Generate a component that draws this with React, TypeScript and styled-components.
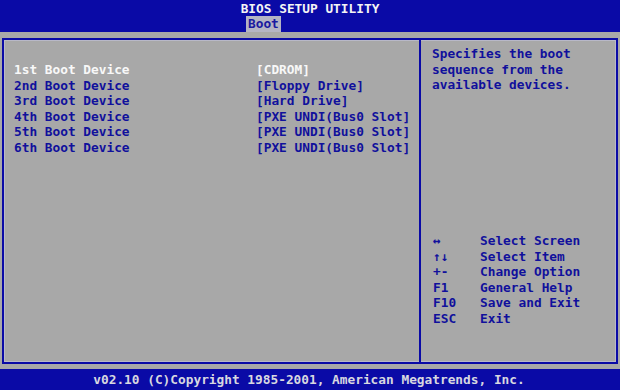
import React from 'react'
import styled, { createGlobalStyle } from 'styled-components'

const GlobalStyle = createGlobalStyle`
  html, body {
    margin: 0;
    padding: 0;
    background: #a8a8a8;
  }
  body {
    font-family: "DejaVu Sans Mono", "Liberation Mono", monospace;
    font-weight: bold;
    font-size: 12.8px;
  }
`

const BLUE = '#0a0aa6'
const TEXT_BLUE = '#10109c'

const Screen = styled.div`
  width: 620px;
  height: 390px;
  display: flex;
  flex-direction: column;
  background: #a8a8a8;
  overflow: hidden;
`

const Header = styled.header`
  height: 32px;
  background: ${BLUE};
  display: flex;
  flex-direction: column;
  align-items: center;
  box-sizing: border-box;
  padding-top: 2px;
`

const Title = styled.div`
  color: #f4f4f4;
  line-height: 13px;
`

const Tabs = styled.div`
  display: flex;
  width: 100%;
  padding-left: 246px;
  box-sizing: border-box;
  margin-top: 1px;
`

const Tab = styled.div<{ $active?: boolean }>`
  height: 16px;
  line-height: 16px;
  padding: 0 2px;
  color: ${(p) => (p.$active ? '#1a1aa0' : '#d0d0d0')};
  background: ${(p) => (p.$active ? '#b4b4c4' : 'transparent')};
`

const Body = styled.main`
  flex: 1;
  padding: 6px 2px 5px 2px;
  box-sizing: border-box;
  display: flex;
`

const Frame = styled.div`
  flex: 1;
  display: grid;
  grid-template-columns: 417px 1fr;
  border: 2px solid ${BLUE};
  box-shadow: inset 0 0 0 1px #b8b8c8;
`

const Settings = styled.section`
  padding: 22px 0 0 10px;
  border-right: 2px solid ${BLUE};
`

const Row = styled.div<{ $selected?: boolean }>`
  display: grid;
  grid-template-columns: 242px auto;
  height: 15.5px;
  line-height: 15.5px;
  color: ${(p) => (p.$selected ? '#f8f8f8' : TEXT_BLUE)};
  white-space: pre;
`

const Help = styled.aside`
  display: flex;
  flex-direction: column;
  padding: 6px 0 36px 11px;
  color: ${TEXT_BLUE};
`

const HelpText = styled.div`
  line-height: 15.5px;
  white-space: pre;
`

const Legend = styled.div`
  margin-top: auto;
`

const LegendRow = styled.div`
  display: grid;
  grid-template-columns: 47px auto;
  line-height: 15.5px;
  height: 15.5px;
  white-space: pre;
  padding-left: 1px;
`

const Footer = styled.footer`
  height: 21px;
  background: ${BLUE};
  color: #d8d8e0;
  display: flex;
  align-items: center;
  justify-content: center;
  padding-right: 2px;
  padding-bottom: 1px;
  box-sizing: border-box;
`

const devices = [
  ['1st Boot Device', '[CDROM]'],
  ['2nd Boot Device', '[Floppy Drive]'],
  ['3rd Boot Device', '[Hard Drive]'],
  ['4th Boot Device', '[PXE UNDI(Bus0 Slot]'],
  ['5th Boot Device', '[PXE UNDI(Bus0 Slot]'],
  ['6th Boot Device', '[PXE UNDI(Bus0 Slot]'],
]

const legend = [
  ['\u2194', 'Select Screen'],
  ['\u2191\u2193', 'Select Item'],
  ['+-', 'Change Option'],
  ['F1', 'General Help'],
  ['F10', 'Save and Exit'],
  ['ESC', 'Exit'],
]

export default function App() {
  return (
    <>
      <GlobalStyle />
      <Screen>
        <Header>
          <Title>BIOS SETUP UTILITY</Title>
          <Tabs>
            <Tab $active>Boot</Tab>
          </Tabs>
        </Header>
        <Body>
          <Frame>
            <Settings>
              {devices.map(([label, value], i) => (
                <Row key={label} $selected={i === 0}>
                  <span>{label}</span>
                  <span>{value}</span>
                </Row>
              ))}
            </Settings>
            <Help>
              <HelpText>{'Specifies the boot\nsequence from the\navailable devices.'}</HelpText>
              <Legend>
                {legend.map(([key, desc]) => (
                  <LegendRow key={desc}>
                    <span>{key}</span>
                    <span>{desc}</span>
                  </LegendRow>
                ))}
              </Legend>
            </Help>
          </Frame>
        </Body>
        <Footer>v02.10 (C)Copyright 1985-2001, American Megatrends, Inc.</Footer>
      </Screen>
    </>
  )
}
